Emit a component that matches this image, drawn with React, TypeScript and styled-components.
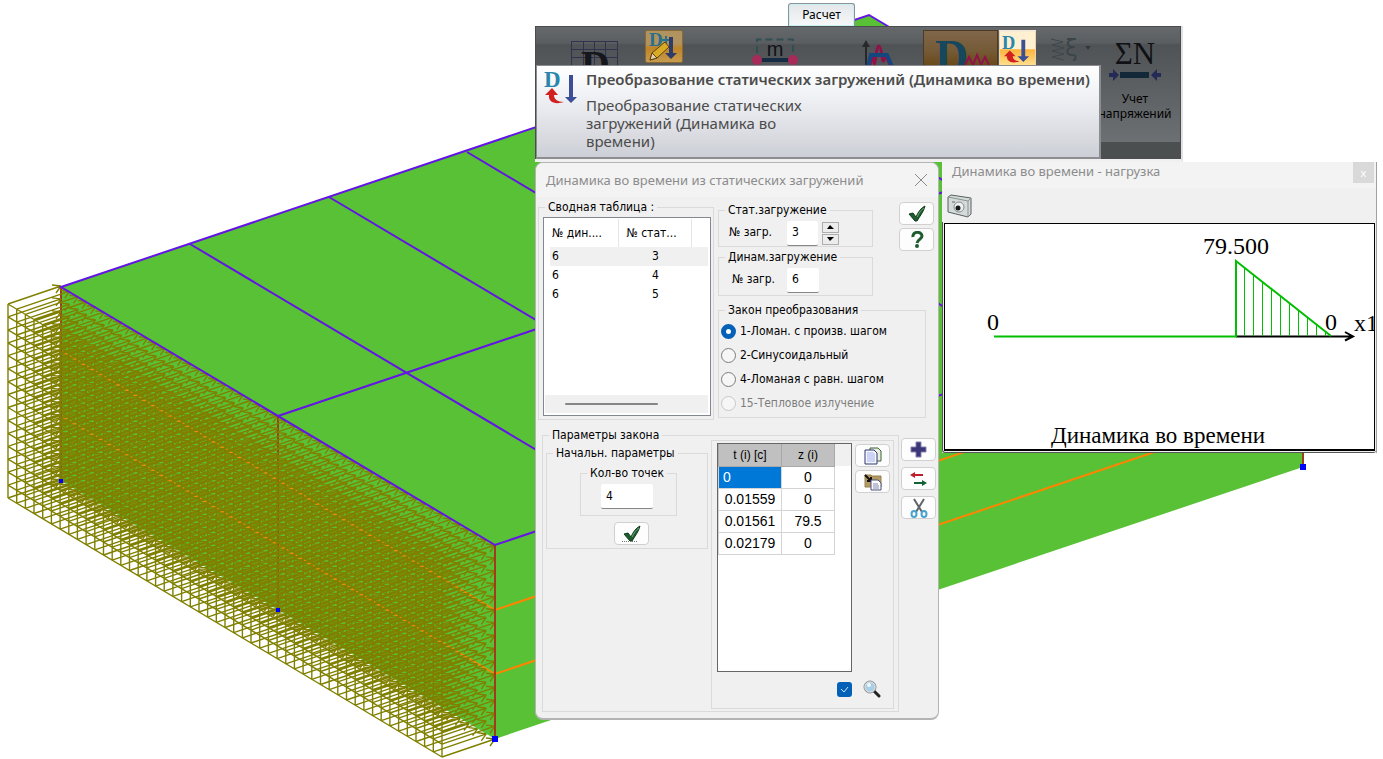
import React from "react";
import styled, { createGlobalStyle, css } from "styled-components";

const ui = '"Noto Sans", "Open Sans", sans-serif';
const small = '"DejaVu Sans Condensed", "DejaVu Sans", sans-serif';

const GlobalStyle = createGlobalStyle`
  * { box-sizing: border-box; }
  body { margin: 0; background: #fff; color: #000; font-family: ${ui}; }
  button, input { font: inherit; color: inherit; margin: 0; padding: 0; }
  svg { display: block; flex: none; }
`;

/* ---------- Page ---------- */

const Page = styled.main`
  position: relative;
  min-height: 100vh;
  overflow: hidden;
`;
const SceneLayer = styled.div`
  position: absolute;
  inset: 0;
  overflow: hidden;
`;
const Workspace = styled.div`
  position: relative;
  display: flex;
  flex-direction: column;
  align-items: flex-start;
  padding: 3px 0 0 535px;
`;
const Windows = styled.div`
  display: flex;
  align-items: flex-start;
  gap: 3px;
`;

/* ---------- Ribbon ---------- */

const Tab = styled.button`
  width: 67px;
  height: 23px;
  margin-left: 253px;
  border: 1px solid #8d9296;
  border-bottom: 0;
  border-radius: 3px 3px 0 0;
  background: linear-gradient(#e4e7ea, #f6f8f9);
  box-shadow: inset 0 0 0 1px #c9f0f2;
  font-size: 12px;
  line-height: 20px;
`;
const Ribbon = styled.section`
  position: relative;
  width: 648px;
  height: 136px;
  border-right: 2px solid #dfe1e2;
  border-bottom: 3px solid #f0f0f0;
  background: #5f6265;
`;
const RibbonPanel = styled.div`
  display: grid;
  grid-template-columns: 74px 107px 109px 62px 76px 51px 43px 84px;
  align-items: start;
  height: 133px;
  padding: 3px 0 0 35px;
  border: 1px solid #4a4d50;
  border-bottom: 17px solid #4c4f4f;
  background: linear-gradient(#66696c, #5b5e61 16px, #505356 18px, #6c7072);
`;
const Tool = styled.button<{ $tone?: "dim" | "lit" | "pencil" }>`
  display: block;
  border: 0;
  background: none;
  justify-self: start;
  ${(p) =>
    p.$tone === "lit" &&
    css`
      padding: 2px 0 0 1px;
      width: 37px;
      height: 36px;
      border: 1px solid #e8d6b0;
      border-top: 2px solid #f5ead8;
      background: linear-gradient(#fff0d2 50%, #ffb43c 54%, #ffdf8c);
    `}
  ${(p) =>
    p.$tone === "dim" &&
    css`
      width: 75px;
      height: 36px;
      border: 1px solid #4d3a22;
      background: linear-gradient(#80664a, #755a36 60%, #6a4a1a);
    `}
  ${(p) =>
    p.$tone === "pencil" &&
    css`
      width: 38px;
      height: 33px;
      border: 1px solid #8a6a32;
      border-radius: 2px;
      background: linear-gradient(#b0935f 40%, #bf8426 55%, #c79b4f);
    `}
`;
const Spaced = styled.span<{ $t: number }>`
  display: block;
  padding-top: ${(p) => p.$t}px;
`;
const StressTool = styled.button`
  display: flex;
  flex-direction: column;
  align-items: center;
  gap: 6px;
  width: 84px;
  padding-top: 7px;
  border: 0;
  background: none;
  font-size: 12px;
  line-height: 15px;
`;
const Tooltip = styled.div`
  position: absolute;
  left: 1px;
  top: 39px;
  display: flex;
  gap: 8px;
  width: 565px;
  height: 94px;
  padding: 4px 0 0 7px;
  border: 1px solid #8b8d90;
  border-width: 1px 2px 2px 1px;
  background: linear-gradient(#fff, #eceef2 40%, #cdcfd6);
  color: #4c4c4c;
`;
const TooltipText = styled.div`
  font-size: 15px;
  line-height: 18px;
  white-space: nowrap;
`;
const TooltipTitle = styled.strong`
  display: block;
  margin-bottom: 8px;
  font-weight: 600;
`;
const TooltipBody = styled.p`
  margin: 0;
  width: 240px;
  white-space: normal;
`;

/* ---------- Dialog ---------- */

const Dialog = styled.section`
  flex: none;
  width: 404px;
  border: 1px solid #b4b4b4;
  border-bottom-width: 2px;
  border-radius: 8px;
  background: #f0f0f0;
  padding-bottom: 6px;
  font-family: ${small};
  font-size: 12px;
`;
const DialogTitle = styled.header`
  display: flex;
  align-items: center;
  justify-content: space-between;
  height: 34px;
  margin-bottom: 5px;
  padding: 0 11px 0 10px;
  border-radius: 7px 7px 0 0;
  background: #f3f3f3;
  color: #8c8c8c;
  font-family: ${ui};
  font-size: 13px;
`;
const Plain = styled.button`
  border: 0;
  background: none;
`;
const Row = styled.div<{ $gap?: number; $left?: number }>`
  display: flex;
  align-items: flex-start;
  gap: ${(p) => p.$gap ?? 0}px;
  padding-left: ${(p) => p.$left ?? 0}px;
`;
const Stack = styled.div<{ $gap?: number; $top?: number; $left?: number }>`
  display: flex;
  flex-direction: column;
  flex: none;
  gap: ${(p) => p.$gap ?? 0}px;
  padding-top: ${(p) => p.$top ?? 0}px;
  padding-left: ${(p) => p.$left ?? 0}px;
`;
const Group = styled.fieldset<{ $w: number; $h: number }>`
  flex: none;
  width: ${(p) => p.$w}px;
  height: ${(p) => p.$h}px;
  min-width: 0;
  margin: 0;
  padding: 0;
  border: 1px solid #dadada;
`;
const Legend = styled.legend`
  margin-left: 6px;
  padding: 0 3px;
  line-height: 10px;
  white-space: nowrap;
`;
const Field = styled.div<{ $indent: number }>`
  display: flex;
  align-items: center;
  height: 24px;
  margin-top: 6px;
  padding-left: ${(p) => p.$indent}px;
  label { flex: none; width: ${(p) => 68 - p.$indent}px; padding-bottom: 3px; }
`;
const NumberBox = styled.input<{ $w: number }>`
  width: ${(p) => p.$w}px;
  height: 25px;
  padding: 0 0 1px 5px;
  border: 0;
  border-bottom: 1px solid #868686;
  border-radius: 2px;
  background: #fff;
`;
const Spinner = styled.div`
  display: flex;
  flex-direction: column;
  gap: 1px;
  margin-left: 4px;
`;
const SpinButton = styled.button`
  display: flex;
  align-items: center;
  justify-content: center;
  width: 17px;
  height: 11px;
  border: 1px solid #adadad;
  background: #ececec;
`;
const IconButton = styled.button`
  display: flex;
  align-items: center;
  justify-content: center;
  width: 35px;
  height: 23px;
  border: 1px solid #d0d0d0;
  border-radius: 4px;
  background: #fdfdfd;
`;
const ListBox = styled.div`
  display: flex;
  flex-direction: column;
  justify-content: space-between;
  width: 168px;
  height: 199px;
  margin: 5px 0 0 4px;
  padding: 1px 2px 2px 1px;
  border: 1px solid #828790;
  background: #fff;
`;
const Summary = styled.table`
  width: 158px;
  margin-left: 5px;
  border-collapse: collapse;
  table-layout: fixed;
  th, td { padding: 0 0 0 2px; text-align: left; font-weight: 400; white-space: nowrap; }
  th { height: 28px; border-right: 1px solid #e5e5e5; }
  th:nth-child(2) { padding-left: 8px; }
  th:last-child { border: 0; }
  td { height: 19px; line-height: 19px; }
  td:nth-child(2) { text-align: center; }
`;
const SummaryRow = styled.tr<{ $on?: boolean }>`
  background: ${(p) => (p.$on ? "#f0f0f0" : "none")};
`;
const ScrollTrack = styled.div`
  height: 18px;
  padding: 8px 50px 0 20px;
  background: #f0f0f0;
`;
const ScrollThumb = styled.div`
  height: 2px;
  border-radius: 1px;
  background: #868686;
`;
const RadioLabel = styled.label<{ $off?: boolean }>`
  display: flex;
  align-items: center;
  gap: 4px;
  height: 24px;
  white-space: nowrap;
  color: ${(p) => (p.$off ? "#7d7d7d" : "#000")};
`;
const Radio = styled.input`
  appearance: none;
  width: 15px;
  height: 15px;
  border: 1px solid #7c7c7c;
  border-radius: 50%;
  background: #f6f6f6;
  &:checked { border: 5px solid #0560b8; background: #fff; }
  &:disabled { border-color: #c8c8c8; }
`;
const PointsBox = styled.div`
  width: 135px;
  height: 229px;
  border: 1px solid #666;
  background: linear-gradient(#f0f0f0 22px, #fff 22px);
`;
const Points = styled.table`
  width: 116px;
  border-collapse: collapse;
  table-layout: fixed;
  font-family: "Liberation Sans", Arial, sans-serif;
  font-size: 14px;
  th { height: 22px; padding: 0; background: #c0c0c0; border: 1px solid #a8a8a8; border-top: 0; font-size: 12px; font-weight: 400; }
  td { height: 22px; padding: 0; border: 1px solid #d4d4d4; text-align: center; background: #fff; }
`;
const ActiveCell = styled.td`
  && { padding-left: 4px; text-align: left; background: #0078d7; color: #fff; }
`;
const Check = styled.input`
  appearance: none;
  display: block;
  width: 15px;
  height: 15px;
  border-radius: 3px;
  background: #0560b8;
`;
const CheckWrap = styled.label`
  position: relative;
  display: block;
  svg { position: absolute; left: 3px; top: 4px; pointer-events: none; }
`;
const CheckRow = styled.div`
  display: flex;
  align-items: center;
  gap: 11px;
  padding: 8px 0 0 125px;
`;
const PointCount = styled.div`
  padding: 10px 0 0 33px;
`;
const CountField = styled.div`
  padding: 6px 0 0 20px;
`;
const ApplyRow = styled.div`
  padding: 6px 0 0 34px;
`;

/* ---------- Plot window ---------- */

const PlotWindow = styled.section`
  flex: none;
  width: 435px;
  background: #f0f0f0;
  border-right: 1px solid #a0a0a0;
`;
const PlotTitle = styled.header`
  display: flex;
  justify-content: space-between;
  height: 26px;
  padding: 0 2px 0 10px;
  background: #f3f3f3;
  color: #8c8c8c;
  font-size: 13px;
  line-height: 18px;
`;
const PlotClose = styled.button`
  width: 21px;
  height: 21px;
  border: 0;
  background: #d9d9d9;
  color: #fff;
  font-size: 11px;
  line-height: 20px;
`;
const PlotTools = styled.div`
  height: 34px;
  padding: 6px 0 0 5px;
`;
const PlotArea = styled.div`
  padding: 1px;
  border: 1px solid #555;
  border-width: 0 0 1px 1px;
  border-radius: 0 0 3px 3px;
  > svg { width: 100%; border: 1px solid #000; border-width: 1px 1px 2px 1px; background: #fff; }
`;
const ChartText = styled.text<{ $caption?: boolean }>`
  font-family: "Liberation Serif", "Times New Roman", serif;
  font-size: ${(p) => (p.$caption ? 23 : 24)}px;
`;

/* ---------- Icons ---------- */

const Arrow: React.FC<{ x: number; y: number; h: number; fill?: string }> = ({ x, y, h, fill = "#3c4f96" }) => (
  <path d={`M${x - 2} ${y}h4v${h - 6}h4l-6 6l-6-6h4z`} fill={fill} />
);
const ConvertIcon = () => (
  <svg width="34" height="36" viewBox="0 0 34 36">
    <text x="0" y="17" fontFamily="Liberation Serif, serif" fontWeight="700" fontSize="23" fill="#2a86ac">D</text>
    <Arrow x={27} y={5} h={28} />
    <path d="M1 25l7-7 6 7h-4c0 4 3 7 10 7-9 3-16 0-15-7z" fill="#d21f1f" />
  </svg>
);
const ConvertSmall = () => (
  <svg width="33" height="30" viewBox="0 0 34 31">
    <text x="1" y="14" fontFamily="Liberation Serif, serif" fontWeight="700" fontSize="19" fill="#2a86ac">D</text>
    <Arrow x={23} y={5} h={23} />
    <path d="M3 22l6-6 6 6h-3c0 3 3 5 7 5-7 3-13 1-13-5z" fill="#d21f1f" />
  </svg>
);
const GridDIcon = () => (
  <svg width="47" height="40" viewBox="0 0 47 40">
    <path d="M.5 0v40M12.500 0v40M23.500 0v40M34.500 0v40M46.500 0v40M0 .5h47M0 8.500h47M0 16.500h47M0 24.500h47" stroke="#30324e" fill="none" />
    <text x="10" y="37" fontFamily="Liberation Serif, serif" fontWeight="700" fontSize="40" fill="#15171c">D</text>
  </svg>
);
const PencilIcon = () => (
  <svg width="36" height="31" viewBox="0 0 36 31">
    <text x="3" y="15" fontFamily="Liberation Serif, serif" fontWeight="700" fontSize="19" fill="#2a6f8c">D</text>
    <path d="M20 5v8M16 9h8" stroke="#2a6f8c" strokeWidth="2" />
    <Arrow x={25} y={6} h={22} fill="#2e3c6c" />
    <path d="M4 29l2-7L19 11l4 5L11 27z" fill="#d9ab25" stroke="#5d4313" />
    <path d="M4 29l2-7 5 5z" fill="#e6d2a6" stroke="#5d4313" />
  </svg>
);
const MassIcon = () => (
  <svg width="46" height="28" viewBox="0 0 46 28">
    <path d="M5 15V1.500h36V15" fill="none" stroke="#2f4f53" strokeWidth="2" strokeDasharray="7 4" />
    <path d="M5 22h36" stroke="#152c42" strokeWidth="4" />
    <circle cx="5" cy="22" r="5" fill="#a82a58" />
    <circle cx="41" cy="22" r="5" fill="#a82a58" />
    <text x="23" y="18" textAnchor="middle" fontFamily="Liberation Sans, sans-serif" fontSize="20" fill="#101216">m</text>
  </svg>
);
const GraphIcon = () => (
  <svg width="48" height="32" viewBox="0 0 48 32">
    <path d="M5 32V4" stroke="#26282b" strokeWidth="2" />
    <path d="M5 0l4 7H1z" fill="#26282b" />
    <path d="M8 30c3-16 4-16 5-8s2-16 5-16 3 20 5 14 4-2 8 12" fill="none" stroke="#8f1349" strokeWidth="3" />
    <path d="M7 26l3-11h16l6 14" fill="none" stroke="#15477f" strokeWidth="4" />
  </svg>
);
const DynamicsIcon = () => (
  <svg width="72" height="34" viewBox="0 0 72 34">
    <text x="11" y="41" fontFamily="Liberation Serif, serif" fontWeight="700" fontSize="46" fill="#16475c">D</text>
    <path d="M41 34l4-8 4 8 4-10 4 10 4-8 4 8" fill="none" stroke="#8f1349" strokeWidth="2" />
  </svg>
);
const SpringIcon = () => (
  <svg width="43" height="28" viewBox="0 0 43 28">
    <path d="M1 3l12 3-11 3 12 3-12 3 12 3-12 3 12 3" fill="none" stroke="#3e474b" />
    <text x="15" y="20" fontFamily="DejaVu Sans, sans-serif" fontSize="23" fill="#3a454a">ξ</text>
    <path d="M35 10h6l-3 4z" fill="#35383b" />
  </svg>
);
const SigmaIcon = () => (
  <svg width="54" height="48" viewBox="0 0 54 48">
    <text x="27" y="27" textAnchor="middle" fontFamily="Liberation Serif, serif" fontSize="31" fill="#101114">ΣN</text>
    <path d="M12 38h29" stroke="#13293a" strokeWidth="6" />
    <path d="M1 36h4v-4l6 6-6 6v-4H1zM53 36h-4v-4l-6 6 6 6v-4h4z" fill="#232a55" />
  </svg>
);
const TickIcon: React.FC<{ dots?: boolean }> = ({ dots }) => (
  <svg width="20" height="18" viewBox="0 0 20 18">
    <path d="M2 9l4-1 3 4c2-5 5-9 9-11-1 5-5 10-8 15H8z" fill="#1d5c2e" stroke="#113c1c" />
    <path d="M10 12c2-4 4-7 7-9" stroke="#69a578" fill="none" />
    {dots && <path d="M0 16.500h15" stroke="#777" strokeDasharray="1 1" />}
  </svg>
);
const HelpIcon = () => (
  <svg width="14" height="18" viewBox="0 0 14 18">
    <path d="M3 6c-1-6 9-6 9-1 0 3-4 3-5 7" fill="none" stroke="#1d5c2e" strokeWidth="3" />
    <circle cx="7" cy="15" r="2" fill="#1d5c2e" />
  </svg>
);
const CopyIcon = () => (
  <svg width="18" height="18" viewBox="0 0 18 18">
    <path d="M6 1h8l3 3v10H6z" fill="#e9f0e0" stroke="#3f6134" />
    <path d="M1 3h9l3 3v11H1z" fill="#f5f7ff" stroke="#30366e" />
    <path d="M3 5h6l2 2v8H3z" fill="#cdd3f4" />
  </svg>
);
const PasteIcon = () => (
  <svg width="18" height="18" viewBox="0 0 18 18">
    <path d="M1 2h6l1 1h9v11H1z" fill="#b39a62" stroke="#94804f" />
    <path d="M1 2l6 6M7 4v4H3" stroke="#111" strokeWidth="2" fill="none" />
    <path d="M7 7h7l3 3v7H7z" fill="#fafaff" stroke="#4d507c" />
    <path d="M9 11h5M9 13h6M9 15h6" stroke="#8588aa" />
  </svg>
);
const PlusIcon = () => (
  <svg width="17" height="17" viewBox="0 0 17 17">
    <path d="M6 1h5v5h5v5h-5v5H6v-5H1V6h5z" fill="#3c3577" stroke="#8580ad" />
  </svg>
);
const SwapIcon = () => (
  <svg width="18" height="16" viewBox="0 0 18 16">
    <path d="M0 4l5-3v2h8v2H5v2z" fill="#be1e2b" />
    <path d="M17 12l-5-3v2H4v2h8v2z" fill="#136235" />
  </svg>
);
const ScissorsIcon = () => (
  <svg width="18" height="20" viewBox="0 0 18 20">
    <path d="M4 1l8 13M14 1L6 14" stroke="#5f6468" strokeWidth="2" />
    <ellipse cx="4" cy="16" rx="2.500" ry="3" fill="none" stroke="#4aa3cf" strokeWidth="2" />
    <ellipse cx="14" cy="16" rx="2.500" ry="3" fill="none" stroke="#4aa3cf" strokeWidth="2" />
  </svg>
);
const LoupeIcon = () => (
  <svg width="18" height="18" viewBox="0 0 18 18">
    <path d="M11 11l5 5" stroke="#222" strokeWidth="3" strokeLinecap="round" />
    <circle cx="7" cy="7" r="6" fill="#a9cfe6" stroke="#8e8e8e" />
    <circle cx="7" cy="7" r="5" fill="none" stroke="#e0e0e0" />
    <circle cx="6" cy="5" r="2" fill="#eef8fd" />
  </svg>
);
const CameraIcon = () => (
  <svg width="25" height="24" viewBox="0 0 25 24">
    <path d="M1 3l3-2 20 3v16l-3 3L1 18z" fill="#d3dad9" stroke="#59605f" />
    <path d="M1 3l20 4v16M21 7l3-3" fill="none" stroke="#8b9391" />
    <path d="M5 7h3v2H5z" fill="#9aa19f" />
    <circle cx="12" cy="13" r="5" fill="#eef1f0" stroke="#858b89" />
    <circle cx="11" cy="14" r="2.500" fill="#171a1a" />
  </svg>
);
const CloseIcon = () => (
  <svg width="12" height="12" viewBox="0 0 12 12">
    <path d="M0 0l12 12M12 0L0 12" stroke="#8a8a8a" />
  </svg>
);

/* ---------- 3D model ---------- */

/* Distributed load on the left wall: an outer frame and one arrow per node. */
const COLS = 50;
const LEVELS = 15;
const node = (i: number, j: number) => [8 + (i * 434) / COLS, 304 + (i * 259) / COLS + (j * 194) / LEVELS];
const line = (a: number[], b: number[]) =>
  `M${a[0].toFixed(1)} ${a[1].toFixed(1)}L${b[0].toFixed(1)} ${b[1].toFixed(1)}`;

const framePath = (() => {
  const parts: string[] = [];
  for (let i = 0; i <= COLS; i++) parts.push(line(node(i, 0), node(i, LEVELS)));
  for (let j = 0; j <= LEVELS; j++) parts.push(line(node(0, j), node(COLS, j)));
  return parts.join("");
})();

const arrowPath = (() => {
  const parts: string[] = [];
  for (let i = 0; i <= COLS; i++)
    for (let j = 0; j <= LEVELS; j++) {
      const [x, y] = node(i, j);
      const tip = [x + 53, y - 18];
      parts.push(line([x, y], tip), line([x + 44, y - 19], tip), line([x + 48, y - 11], tip));
    }
  return parts.join("");
})();

const Scene = () => (
  <svg width="1383" height="759" viewBox="0 0 1383 759" aria-hidden="true">
    <path d="M61 287L869 15l434 258v194L495 739 61 481z" fill="#59c135" />
    <path d="M61 351l434 259 808-272M61 416l434 258 808-272" fill="none" stroke="#ff8400" strokeWidth="2" />
    <path d="M61 287v194M278 416v194M1303 273v194" stroke="#a03c1e" strokeWidth="2" />
    <path d={arrowPath} fill="none" stroke="#808000" strokeWidth="1.4" />
    <path d={framePath} fill="none" stroke="#808000" strokeWidth="1.4" />
    <path d="M495 545v194" stroke="#a03c1e" strokeWidth="2" />
    <path
      d="M61 287L869 15l434 258L495 545zM278 416l808-272M190 244l434 258M329 197l434 258M467 152l434 258M604 104l434 259M739 59l434 258"
      fill="none"
      stroke="#6414e6"
      strokeWidth="2"
    />
    <path d="M492 736h6v6h-6zM1300 464h6v6h-6zM59 479h4v4h-4zM276 608h4v4h-4z" fill="#0000ff" />
  </svg>
);

/* ---------- Sections ---------- */

const RibbonBar = () => (
  <Ribbon aria-label="Расчет">
    <RibbonPanel>
      <Tool aria-label="D"><Spaced $t={11}><GridDIcon /></Spaced></Tool>
      <Tool $tone="pencil" aria-label="D"><PencilIcon /></Tool>
      <Tool aria-label="m"><Spaced $t={8}><MassIcon /></Spaced></Tool>
      <Tool aria-label="D"><Spaced $t={10}><GraphIcon /></Spaced></Tool>
      <Tool $tone="dim" aria-label="D"><DynamicsIcon /></Tool>
      <Tool $tone="lit" aria-label="D"><ConvertSmall /></Tool>
      <Tool aria-label="ξ"><Spaced $t={6}><SpringIcon /></Spaced></Tool>
      <StressTool>
        <SigmaIcon />
        <span>Учет<br />напряжений</span>
      </StressTool>
    </RibbonPanel>
    <Tooltip role="tooltip">
      <ConvertIcon />
      <TooltipText>
        <TooltipTitle>Преобразование статических загружений (Динамика во времени)</TooltipTitle>
        <TooltipBody>Преобразование статических загружений (Динамика во времени)</TooltipBody>
      </TooltipText>
    </Tooltip>
  </Ribbon>
);

const laws = [
  { text: "1-Ломан. с произв. шагом", on: true },
  { text: "2-Синусоидальный" },
  { text: "4-Ломаная с равн. шагом" },
  { text: "15-Тепловое излучение", off: true },
];

const points = [
  ["0", "0"],
  ["0.01559", "0"],
  ["0.01561", "79.5"],
  ["0.02179", "0"],
];

const LoadDialog = () => (
  <Dialog>
    <DialogTitle>
      <span>Динамика во времени из статических загружений</span>
      <Plain aria-label="×"><CloseIcon /></Plain>
    </DialogTitle>

    <Row $left={2}>
      <Group $w={176} $h={218}>
        <Legend>Сводная таблица :</Legend>
        <ListBox>
          <Summary>
            <colgroup><col width="68" /><col width="73" /><col width="17" /></colgroup>
            <thead><tr><th>№ дин....</th><th>№ стат...</th><th /></tr></thead>
            <tbody>
              {["3", "4", "5"].map((n, i) => (
                <SummaryRow key={n} $on={i === 0}><td>6</td><td>{n}</td><td /></SummaryRow>
              ))}
            </tbody>
          </Summary>
          <ScrollTrack><ScrollThumb /></ScrollTrack>
        </ListBox>
      </Group>

      <Stack $gap={9} $left={4}>
        <Row $gap={26}>
          <Stack $gap={5} $top={3}>
            <Group $w={155} $h={42}>
              <Legend>Стат.загружение</Legend>
              <Field $indent={10}>
                <label htmlFor="static">№ загр.</label>
                <NumberBox id="static" $w={31} defaultValue="3" />
                <Spinner>
                  <SpinButton aria-label="+"><svg width="7" height="4"><path d="M0 4l3-4 4 4z" /></svg></SpinButton>
                  <SpinButton aria-label="-"><svg width="7" height="4"><path d="M0 0l3 4 4-4z" /></svg></SpinButton>
                </Spinner>
              </Field>
            </Group>
            <Group $w={155} $h={44}>
              <Legend>Динам.загружение</Legend>
              <Field $indent={13}>
                <label htmlFor="dynamic">№ загр.</label>
                <NumberBox id="dynamic" $w={32} defaultValue="6" />
              </Field>
            </Group>
          </Stack>
          <Stack $gap={3}>
            <IconButton aria-label="OK"><TickIcon /></IconButton>
            <IconButton aria-label="?"><HelpIcon /></IconButton>
          </Stack>
        </Row>
        <Group $w={208} $h={113}>
          <Legend>Закон преобразования</Legend>
          <Stack $top={4} $left={2}>
            {laws.map((l) => (
              <RadioLabel key={l.text} $off={l.off}>
                <Radio type="radio" name="law" defaultChecked={l.on} disabled={l.off} />
                {l.text}
              </RadioLabel>
            ))}
          </Stack>
        </Group>
      </Stack>
    </Row>

    <Stack $top={10}>
      <Row $left={6} $gap={2}>
        <Group $w={357} $h={282}>
          <Legend>Параметры закона</Legend>
          <Row $gap={3} $left={3}>
            <Stack $top={8}>
              <Group $w={162} $h={101}>
                <Legend>Начальн. параметры</Legend>
                <PointCount>
                  <Group $w={97} $h={48}>
                    <Legend><label htmlFor="count">Кол-во точек</label></Legend>
                    <CountField><NumberBox id="count" $w={52} defaultValue="4" /></CountField>
                  </Group>
                  <ApplyRow><IconButton aria-label="OK"><TickIcon dots /></IconButton></ApplyRow>
                </PointCount>
              </Group>
            </Stack>
            <Group as="div" $w={183} $h={269}>
              <Row $left={5} $gap={3}>
                <Stack $top={2}>
                  <PointsBox>
                    <Points>
                      <colgroup><col width="63" /><col width="53" /></colgroup>
                      <thead><tr><th>t (i) [c]</th><th>z (i)</th></tr></thead>
                      <tbody>
                        {points.map(([t, z], i) => (
                          <tr key={t}>
                            {i === 0 ? <ActiveCell>{t}</ActiveCell> : <td>{t}</td>}
                            <td>{z}</td>
                          </tr>
                        ))}
                      </tbody>
                    </Points>
                  </PointsBox>
                </Stack>
                <Stack $gap={3} $top={3}>
                  <IconButton aria-label="Copy"><CopyIcon /></IconButton>
                  <IconButton aria-label="Paste"><PasteIcon /></IconButton>
                </Stack>
              </Row>
              <CheckRow>
                <CheckWrap>
                  <Check type="checkbox" defaultChecked aria-label="z (i)" />
                  <svg width="9" height="7"><path d="M1 3l3 3 4-5" fill="none" stroke="#cfe2f5" /></svg>
                </CheckWrap>
                <Plain aria-label="Zoom"><LoupeIcon /></Plain>
              </CheckRow>
            </Group>
          </Row>
        </Group>
        <Stack $gap={6} $top={8}>
          <IconButton aria-label="+"><PlusIcon /></IconButton>
          <IconButton aria-label="Swap"><SwapIcon /></IconButton>
          <IconButton aria-label="Cut"><ScissorsIcon /></IconButton>
        </Stack>
      </Row>
    </Stack>
  </Dialog>
);

const hatch = Array.from({ length: 10 }, (_, k) => {
  const x = 1244 + k * 9;
  return `M${x}.5 336V${Math.round(261 + (x - 1236) * 0.79)}`;
}).join("");

const Plot = () => (
  <PlotWindow>
    <PlotTitle>
      <span>Динамика во времени - нагрузка</span>
      <PlotClose aria-label="x">x</PlotClose>
    </PlotTitle>
    <PlotTools>
      <Plain aria-label="Camera"><CameraIcon /></Plain>
    </PlotTools>
    <PlotArea>
      <svg height="228" viewBox="945 224 430 225" preserveAspectRatio="xMinYMin slice">
        <path d="M1236 336.500h117M1345 332l8 4.500-8 4" fill="none" stroke="#000" strokeWidth="2" />
        <path d={hatch} stroke="#00be00" />
        <path d="M994 336.500h242V261l95 75" fill="none" stroke="#00be00" strokeWidth="2" />
        <ChartText x="987" y="330">0</ChartText>
        <ChartText x="1203" y="254">79.500</ChartText>
        <ChartText x="1325" y="330">0</ChartText>
        <ChartText x="1354" y="331">x1</ChartText>
        <ChartText $caption x="1051" y="443">Динамика во времени</ChartText>
      </svg>
    </PlotArea>
  </PlotWindow>
);

export default function App() {
  return (
    <Page>
      <GlobalStyle />
      <SceneLayer><Scene /></SceneLayer>
      <Workspace>
        <Tab>Расчет</Tab>
        <RibbonBar />
        <Windows>
          <LoadDialog />
          <Plot />
        </Windows>
      </Workspace>
    </Page>
  );
}
